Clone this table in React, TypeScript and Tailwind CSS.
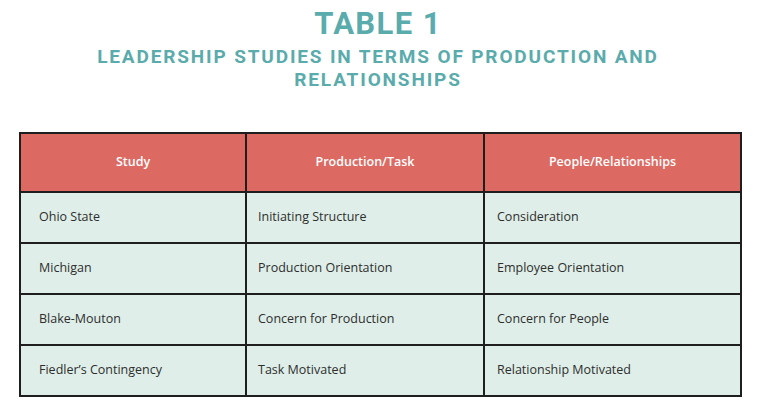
import React from 'react';

const rows = [
  ['Ohio State', 'Initiating Structure', 'Consideration'],
  ['Michigan', 'Production Orientation', 'Employee Orientation'],
  ['Blake-Mouton', 'Concern for Production', 'Concern for People'],
  ['Fiedler\u2019s Contingency', 'Task Motivated', 'Relationship Motivated'],
];

export default function App() {
  return (
    <div className="w-[760px] h-[410px] bg-white overflow-hidden" style={{ fontFamily: '"Open Sans", sans-serif' }}>
      <div className="pt-[6px] text-center text-[#5aabab] font-bold pr-[4px]" style={{ fontFamily: 'Roboto, sans-serif' }}>
        <h1 className="text-[31px] leading-[36px] tracking-[1.4px]">TABLE 1</h1>
        <h2 className="text-[19px] leading-[23px] tracking-[1.85px] mt-[3px]">
          LEADERSHIP STUDIES IN TERMS OF PRODUCTION AND
          <br />
          RELATIONSHIPS
        </h2>
      </div>
      <table className="ml-[19px] mt-[41px] w-[721px] border-collapse text-[12.5px] table-fixed">
        <colgroup>
          <col className="w-[226px]" />
          <col className="w-[238px]" />
          <col className="w-[257px]" />
        </colgroup>
        <thead>
          <tr className="bg-[#dc6a63] text-white h-[59px]">
            <th className="border-2 border-[#1e1e1e] font-semibold">Study</th>
            <th className="border-2 border-[#1e1e1e] font-semibold">Production/Task</th>
            <th className="border-2 border-[#1e1e1e] font-semibold">People/Relationships</th>
          </tr>
        </thead>
        <tbody>
          {rows.map((r, i) => (
            <tr key={i} className="bg-[#dfeee8] text-[#2e2e2e] h-[51px]">
              <td className="border-2 border-[#1e1e1e] pl-[18px]">{r[0]}</td>
              <td className="border-2 border-[#1e1e1e] pl-[11px]">{r[1]}</td>
              <td className="border-2 border-[#1e1e1e] pl-[12px]">{r[2]}</td>
            </tr>
          ))}
        </tbody>
      </table>
    </div>
  );
}
